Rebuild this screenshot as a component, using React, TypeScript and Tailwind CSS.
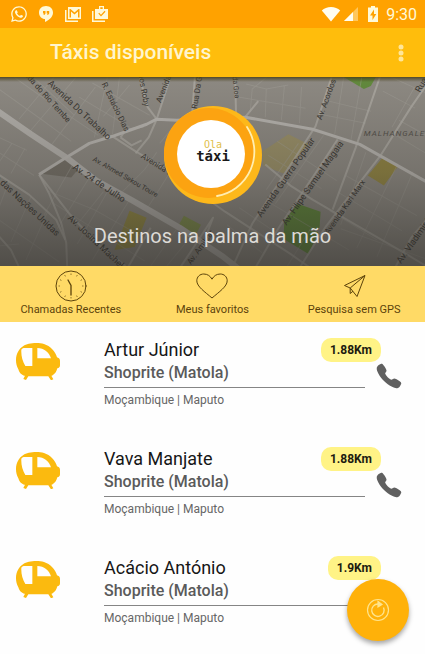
import { FaWhatsapp } from "react-icons/fa";
import { IoCall } from "react-icons/io5";

type Taxi = { name: string; place: string; region: string; distance: string };

const taxis: Taxi[] = [
  { name: "Artur Júnior", place: "Shoprite (Matola)", region: "Moçambique | Maputo", distance: "1.88Km" },
  { name: "Vava Manjate", place: "Shoprite (Matola)", region: "Moçambique | Maputo", distance: "1.88Km" },
  { name: "Acácio António", place: "Shoprite (Matola)", region: "Moçambique | Maputo", distance: "1.9Km" },
];

function StatusBar() {
  return (
    <div className="flex h-7 items-center justify-between bg-[#ffa200] pl-[10px] pr-2 text-[#fff9d8]">
      <div className="flex items-center gap-[9px]">
        <FaWhatsapp className="size-[18px]" />
        <svg viewBox="0 0 18 18" className="size-[18px]" fill="currentColor">
          <path fillRule="evenodd" d="M9 1C4.800 1 2 3.800 2 7.700c0 3.700 2.900 6.300 6 6.300V17c4.200-2 8-5.300 8-9.300C16 3.800 13.200 1 9 1ZM6 6h2.500v2.500L7.300 10H6.500L7 8.500H6Zm3.700 0h2.500v2.500L11 10h-.8l.5-1.500h-1Z" />
        </svg>
        <svg viewBox="0 0 18 18" className="size-[18px]" fill="currentColor">
          <path d="M1 5h1.500v10.500H14V17H1Z" />
          <path fillRule="evenodd" d="M4 2h13v12H4ZM5.500 4v8.500h1.500V6.500l3.500 3 3.500-3v6h1.500V4h-1L10.500 7.500 6.500 4Z" />
        </svg>
        <svg viewBox="0 0 18 18" className="size-[18px]" fill="currentColor">
          <path d="M1 6h1.500v9.500H14V17H1Z" />
          <path fillRule="evenodd" d="M8 1h5v3h4v10H4V4h4Zm1.300 1.300V4h2.400V2.300ZM7.300 8.500l2.700 3 4.500-4.800-.9-.9L10 9.700 8.200 7.700Z" />
        </svg>
      </div>
      <div className="flex items-center">
        <svg viewBox="0 0 20 16" className="h-4 w-5" fill="#fffdf0">
          <path d="M10 15.500 .8 4.500C3 2.500 6.500 1 10 1s7 1.500 9.200 3.500Z" />
        </svg>
        <svg viewBox="0 0 16 16" className="ml-[2px] h-4 w-4">
          <path d="M15 1v14H1Z" fill="#ffc75c" />
          <path d="M10 6v9H1Z" fill="#fffdf0" />
        </svg>
        <svg viewBox="0 0 12 18" className="ml-2 h-[18px] w-3" fill="#fff9d8">
          <path fillRule="evenodd" d="M4 1h4v1.500h3V17H1V2.500h3ZM7 4.500 3 10.500h2.500V15L9.300 9H7Z" />
        </svg>
        <span className="ml-[7px] pt-px text-base leading-5">9:30</span>
      </div>
    </div>
  );
}

const majorRoads = [
  "M-4 32 32 57 67 80 97 103 133 123 180 150 222 178 240 192",
  "M40 97 67 80 90 66 113 59 147 47 157 42 177 43 245 40 312 52 359 67 425 104",
];

const roads = [
  "M113 59 136 74 167 92 225 134 290 176 310 190",
  "M157 42 170 2M157 42 148 30 140 0M157 42 149 60 136 76M121 60 126 53 144 49M121 60 132 68 142 63",
  "M40 97 50 116 62 145 67 165 68 190",
  "M40 97 70 136 98 166 126 188",
  "M-2 96 30 117 57 142 66 162",
  "M-2 156 12 172 20 189",
  "M331 0 315 49 252 146 232 190",
  "M379 0 355 70 332 132",
  "M428 4 410 30 379 79 325 149 299 190",
  "M337 62 320 88 279 149 255 190",
  "M265 87 290 108 312 122 355 147 405 176 425 188",
  "M428 139 410 160 394 190",
  "M206 158 213 140 190 175 180 190M151 150 128 190",
  "M258 24 245 40M235 0 236 40M195 0 192 40",
];

const lanes = [
  "M0 12 42 42 72 64M15 0 57 30 99 58M34 0 75 38M0 60 28 73M55 0 20 42M77 0 31 54M96 10 52 68",
  "M108 0 95 60M120 0 113 57M80 20 130 50M93 6 150 38M130 8 104 39M160 66 174 49M74 86 45 137M92 97 58 151M111 109 78 166M130 122 93 182",
  "M48 113 95 132 150 163M55 126 145 183M10 104 0 130M32 119 12 164M48 135 27 182M0 142 60 184M157 75 145 92 122 115M172 92 148 130",
  "M246 7 266 12 288 8M250 35 252 12 269 -2M265 40 266 12M281 43 284 9M299 46 301 10M238 20 305 31M343 0 334 57M361 0 350 64M320 37 365 46M324 23 370 34",
  "M390 0 425 16M382 14 414 31M398 43 425 58M390 55 425 76M365 75 340 147M397 86 356 170M412 94 376 179M345 98 416 138M338 115 401 153M329 133 376 162",
  "M298 66 266 112M323 58 275 126M277 64 336 103M268 78 321 111M340 151 425 181M310 151 287 188M271 126 348 172M239 130 276 155M227 147 262 175",
  "M0 75 35 98M13 66 0 85M26 71 12 96M0 168 20 166M80 144 104 114M177 151 151 188M190 160 167 188M413 11 391 50",
];

const streetNames: [string, number, number, number, number][] = [
  ["Avenida do Rio Tembe", 15, -13, 48, 8],
  ["Avenida Do Trabalho", 48, 7, 43, 9],
  ["R. Estácio Dias", 102, 7, 64, 8],
  ["Dos Irmãos Roby", 134, -30, 80, 8],
  ["Avenida de Angola", 161, 26, -68, 8],
  ["Rua Da Guiné", 197, 32, -81, 8],
  ["Av. Ahmed Sekou Toure", 93, 83, 30, 7],
  ["Av. 24 de Julho", 73, 91, 34, 9],
  ["Avenida Eduardo", 141, 80, 32, 8],
  ["Ao das Nações Unidas", -9, 97, 43, 9],
  ["Av. Josina Machel", 68, 141, 43, 9],
  ["Rua da Goa", 231, -14, 84, 7],
  ["Av. Acordos", 321, 43, -70, 8],
  ["Avenida Guerra Popular", 261, 140, -55, 9],
  ["Av. Filipe Samuel Magaia", 286, 148, -55, 9],
  ["Avenida Karl Marx", 328, 157, -55, 8],
  ["Av. Vladimir Lenine", 400, 186, -55, 9],
  ["Rua", 419, 16, -60, 9],
  ["Av. Amilcar", 191, 187, -54, 8],
];

function Hero() {
  return (
    <section className="relative h-[189px] overflow-hidden bg-[#8f8b84]">
      <svg viewBox="0 0 425 188" preserveAspectRatio="xMidYMid slice" className="absolute inset-0 size-full" aria-hidden="true">
        <defs>
          <linearGradient id="shade" x1="0" y1="0" x2="0" y2="1">
            <stop offset="0" stopColor="#2a2824" stopOpacity="0.02" />
            <stop offset="0.5" stopColor="#2a2824" stopOpacity="0.24" />
            <stop offset="1" stopColor="#2a2824" stopOpacity="0.62" />
          </linearGradient>
          <linearGradient id="edge" x1="0" y1="0" x2="0" y2="1">
            <stop offset="0" stopColor="#4b431f" stopOpacity="0.9" />
            <stop offset="1" stopColor="#4b431f" stopOpacity="0" />
          </linearGradient>
        </defs>
        <path d="M40 96 67 81 82 88 72 100Z" fill="#777269" />
        <path d="M130 133 147 140 135 169 115 172Z" fill="#978d45" />
        <path d="M184 138 201 147 196 157 177 151Z" fill="#82914d" />
        <path d="M288 57 308 67 283 96 263 88 262 74Z" fill="#9b9169" />
        <path d="M381 81 397 89 383 108 367 98Z" fill="#938643" />
        <path d="M343 0 375 0 370 9 363 12Z" fill="#638b3d" />
        <path d="M297 126 320 134 319 150 308 153 318 154 308 176 283 161 284 143Z" fill="#628a3b" />
        <g fill="none" stroke="#a8a49d" strokeWidth="1" strokeOpacity="0.4">
          {lanes.map((d) => <path key={d} d={d} />)}
        </g>
        <g fill="none" stroke="#b4b0aa" strokeWidth="2" strokeOpacity="0.7" strokeLinejoin="round">
          {roads.map((d) => <path key={d} d={d} />)}
        </g>
        <path d={majorRoads[0]} fill="none" stroke="#b4b1ac" strokeWidth="6" strokeLinejoin="round" />
        <path d={majorRoads[1]} fill="none" stroke="#b8b5b0" strokeWidth="3" strokeLinejoin="round" />
        <g fill="#3b3833" fontFamily="Roboto, sans-serif">
          {streetNames.map(([label, x, y, angle, size]) => (
            <text key={label} transform={`translate(${x} ${y}) rotate(${angle})`} fontSize={size}>
              {label}
            </text>
          ))}
          <text x="363" y="59" fontSize="8" fontStyle="italic" letterSpacing="1" fill="#54504a">MALHANGALENE</text>
        </g>
        <rect width="425" height="188" fill="url(#shade)" />
        <rect width="425" height="5" fill="url(#edge)" />
      </svg>
      <div className="relative flex flex-col items-center pt-[29px]">
        <svg viewBox="0 0 98 98" className="size-[98px]" role="img" aria-label="Ola táxi">
          <circle cx="49" cy="49" r="49" fill="#fdb81a" />
          <circle cx="45" cy="47" r="45" fill="#fca311" />
          <path d="M83 21A45 45 0 0 1 53 90" fill="none" stroke="#ffeeb0" strokeWidth="1.800" strokeLinecap="round" />
          <circle cx="47" cy="48" r="34" fill="#fff" />
          <text x="49" y="42" textAnchor="middle" fontFamily="DejaVu Sans Mono, monospace" fontSize="10" fill="#dfc04a">Ola</text>
          <text x="49" y="55" textAnchor="middle" fontFamily="DejaVu Sans Mono, monospace" fontSize="14" fontWeight="700" fill="#191919">táxi</text>
        </svg>
        <p className="mt-[18px] text-xl leading-7 text-[#dddbd7]">Destinos na palma da mão</p>
      </div>
    </section>
  );
}

function ClockIcon() {
  const ticks = Array.from({ length: 12 }, (_, i) => i * 30);
  return (
    <svg viewBox="0 0 32 32" className="size-8" fill="none" stroke="#5c430b" strokeWidth="1" strokeLinecap="round">
      <circle cx="16" cy="16" r="15" />
      {ticks.map((a) => <path key={a} d="M16 4v.4" strokeWidth="0.800" transform={`rotate(${a} 16 16)`} />)}
      <path d="M16 25V15.500L13 10" strokeWidth="1.300" />
    </svg>
  );
}

function HeartIcon() {
  return (
    <svg viewBox="0 0 32 32" className="size-8" fill="none" stroke="#5c430b" strokeWidth="1" strokeLinejoin="round">
      <path d="M16 28C9 22 .8 16.500 .8 10.800.8 6.800 3.800 4 7.800 4c3.700 0 6.500 2 8.200 5.200C17.700 6 20.500 4 24.200 4c4 0 7 2.800 7 6.800C31.200 16.500 23 22 16 28Z" />
    </svg>
  );
}

function PlaneIcon() {
  return (
    <svg viewBox="0 0 32 32" className="size-8" fill="none" stroke="#5c430b" strokeWidth="1" strokeLinejoin="round">
      <path d="M27 5.500 6.500 15.500l5.700 2.500L19 26.500ZM27 5.500 12.200 18v5.500l2.800-2.300" />
    </svg>
  );
}

const shortcuts = [
  { label: "Chamadas Recentes", Icon: ClockIcon },
  { label: "Meus favoritos", Icon: HeartIcon },
  { label: "Pesquisa sem GPS", Icon: PlaneIcon },
];

function TaxiIcon() {
  return (
    <svg viewBox="0 0 132 114" className="h-[38px] w-11" aria-hidden="true">
      <path
        fill="#fbba0f"
        fillRule="evenodd"
        d="M22 12C34 3 65 0 84 6c19 6 34 22 39 40 4 1 9 4 9 10v14c0 5-3 8-8 9-2 10-8 18-16 22h-2l6 11-7 3-8-12H37l-7 11-8-3 5-10h-3C15 98 9 91 7 82 2 72 0 64 0 54c0-18 8-33 22-42ZM16 24c-1 16 3 34 12 48h21V18H27c-6 0-10 2-11 6ZM64 18v31h41C100 32 84 18 64 18Z"
      />
    </svg>
  );
}

function TaxiRow({ taxi }: { taxi: Taxi }) {
  return (
    <li className="flex h-[109px] pl-4 pr-6 pt-4">
      <div className="w-[88px] shrink-0 pt-1">
        <TaxiIcon />
      </div>
      <div className="min-w-0 flex-1">
        <div className="mr-5 flex h-6 items-center justify-between">
          <h2 className="text-lg leading-6 text-[#161616]">{taxi.name}</h2>
          <span className="flex h-6 items-center rounded-[10px] bg-[#fff386] px-[9px] text-xs font-bold text-[#1c1a10]">
            {taxi.distance}
          </span>
        </div>
        <div className="flex gap-3">
          <div className="min-w-0 flex-1">
            <p className="h-[26px] border-b border-[#858585] text-base leading-[22px] font-medium text-[#5a5a5a]">{taxi.place}</p>
            <p className="text-xs leading-6 text-[#666]">{taxi.region}</p>
          </div>
          <button type="button" aria-label={`Ligar para ${taxi.name}`} className="mt-0.5 flex size-6 items-center justify-center text-[#606060]">
            <IoCall className="size-7 shrink-0" />
          </button>
        </div>
      </div>
    </li>
  );
}

export default function App() {
  return (
    <div className="relative min-h-screen overflow-x-hidden bg-[#fefefe] font-[Roboto,sans-serif]">
      <StatusBar />
      <header className="flex h-[49px] items-center justify-between bg-[#ffbd0c] pl-[50px] pr-3 text-[#fff5ce]">
        <h1 className="text-[21px] font-medium">Táxis disponíveis</h1>
        <button type="button" aria-label="Mais opções" className="flex h-8 w-6 items-center justify-center">
          <svg viewBox="0 0 6 20" className="h-5 w-[6px]" fill="#ffe69a">
            <circle cx="3" cy="4" r="2.500" />
            <circle cx="3" cy="10" r="2.500" />
            <circle cx="3" cy="16" r="2.500" />
          </svg>
        </button>
      </header>
      <main>
        <Hero />
        <nav className="grid h-14 grid-cols-3 bg-[#ffda66]">
          {shortcuts.map(({ label, Icon }) => (
            <button key={label} type="button" className="flex flex-col items-center pt-1 text-[11px] leading-4 text-[#5c430b]">
              <Icon />
              {label}
            </button>
          ))}
        </nav>
        <ul>
          {taxis.map((taxi) => (
            <TaxiRow key={taxi.name} taxi={taxi} />
          ))}
        </ul>
      </main>
      <button
        type="button"
        aria-label="Atualizar"
        className="fixed right-4 bottom-[13px] flex size-[62px] items-center justify-center rounded-full bg-[#ffb109] shadow-[0_3px_5px_rgba(0,0,0,0.35)]"
      >
        <svg viewBox="0 0 24 24" className="size-6" fill="none" stroke="#ffe48c" strokeWidth="1.200">
          <circle cx="12" cy="12" r="10.500" />
          <path d="M17.500 9.500A6.200 6.200 0 1 1 12 6" strokeWidth="1.400" />
          <path d="M12 3.500 16 6.500 12 9Z" fill="#ffe48c" />
        </svg>
      </button>
    </div>
  );
}
